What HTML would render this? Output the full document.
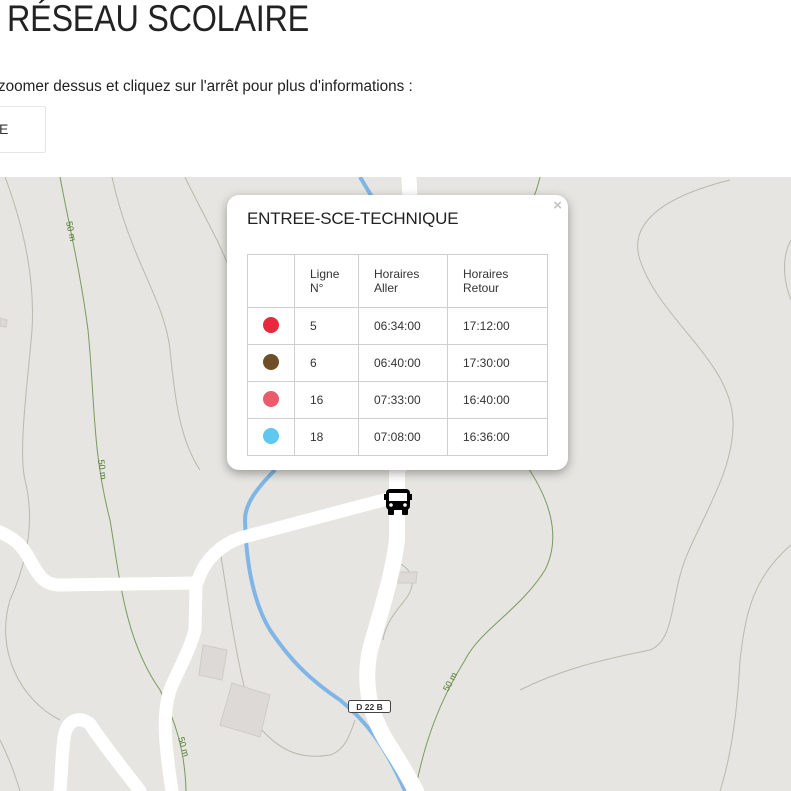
<!DOCTYPE html>
<html><head><meta charset="utf-8"><style>
*{margin:0;padding:0;box-sizing:border-box}
body{width:791px;height:791px;overflow:hidden;background:#fff;position:relative;font-family:"Liberation Sans",sans-serif}
.t{position:absolute;left:7px;top:-2px;font-size:37px;color:#222;letter-spacing:-0.3px;transform:scaleX(0.875);transform-origin:0 0;white-space:nowrap}
.s{position:absolute;left:-2px;top:78px;font-size:15.3px;color:#222;white-space:nowrap}
.box{position:absolute;left:-2px;top:106px;width:48px;height:47px;border:1px solid #e6e6e6;border-radius:2px;font-size:14px;color:#333;padding:14px 0 0 0}
.map{position:absolute;left:0;top:177px;width:791px;height:614px;background:#e6e5e1}
.pop{position:absolute;left:227px;top:195px;width:341px;height:275px;background:#fff;border-radius:12px;box-shadow:0 3px 10px rgba(0,0,0,.35)}
.pop h3{position:absolute;left:20px;top:14px;font-weight:normal;font-size:17px;color:#222;letter-spacing:-0.2px}
.x{position:absolute;right:6px;top:2px;color:#c3c3c3;font-size:15px;font-weight:bold}
table{position:absolute;left:20px;top:59px;border-collapse:collapse;font-size:12px;color:#333}
td{border:1px solid #cfcfcf;vertical-align:middle;padding:0 0 0 15px;height:37px}
tr.h td{height:53px;vertical-align:middle}
.d{width:16px;height:16px;border-radius:50%;display:inline-block;margin-left:0}
.tip{position:absolute;left:388px;top:469px;width:0;height:0;border-left:10px solid transparent;border-right:10px solid transparent;border-top:10px solid #fff}
</style></head><body>
<div class="t">RÉSEAU SCOLAIRE</div>
<div class="s">zoomer dessus et cliquez sur l'arrêt pour plus d'informations :</div>
<div class="box">E</div>
<div class="map">
<svg width="791" height="614" viewBox="0 177 791 614" xmlns="http://www.w3.org/2000/svg" style="position:absolute;left:0;top:0">
<g fill="none" stroke="#b9b9ad" stroke-width="1">
<path d="M5 177 C25 230 35 280 32 330 C28 380 18 450 25 480 C35 520 28 560 10 600 C-5 650 20 700 60 720"/>
<path d="M112 177 C130 260 165 300 170 350 C175 400 180 440 200 470"/>
<path d="M185 177 C215 240 240 270 240 330"/>
<path d="M730 180 C650 200 630 230 640 260 C660 320 730 360 733 420 C735 470 700 520 685 560 C670 600 675 640 650 650 C600 660 560 670 520 690"/>
<path d="M791 545 C750 580 745 620 740 660 C737 720 730 760 720 791"/>
<path d="M791 240 C780 260 785 285 791 300"/>
<path d="M220 550 C228 600 235 650 245 690"/>
<path d="M0 740 C10 760 15 775 20 791"/>
<path d="M262 730 C280 750 300 760 330 755 C345 750 350 735 355 720"/>
<path d="M390 560 C410 565 420 580 405 600 C395 612 385 625 383 640"/>
</g>
<g fill="none" stroke="#7b9a5d" stroke-width="1">
<path d="M60 177 C70 230 80 270 88 330 C95 400 92 450 110 520 C120 580 125 640 160 690 C175 720 185 750 186 791"/>
<path d="M515 450 C555 500 560 540 545 570 C520 610 480 630 465 660 C440 700 425 740 415 791"/>
<path d="M540 177 C538 185 536 192 534 196"/>
</g>
<text x="66" y="222" font-size="9" fill="#4f7a2e" transform="rotate(78 66 222)">50 m</text>
<text x="98" y="460" font-size="9" fill="#4f7a2e" transform="rotate(82 98 460)">50 m</text>
<text x="178" y="738" font-size="9" fill="#4f7a2e" transform="rotate(74 178 738)">50 m</text>
<text x="448" y="692" font-size="9" fill="#4f7a2e" transform="rotate(-62 448 692)">50 m</text>
<g fill="#dcd9d7" stroke="#cfcbc8">
<polygon points="203,645 227,650 222,680 199,675"/>
<polygon points="232,683 270,695 260,737 220,725"/>
<polygon points="398,572 417,572 416,583 398,583"/>
<polygon points="0,318 7,320 6,327 0,326"/>
</g>
<path d="M360 177 L372 197 M275 470 C255 490 245 505 245 520 C246 560 252 600 270 630 C290 660 310 680 340 700 C365 720 385 745 405 791" fill="none" stroke="#7fb6e6" stroke-width="4"/>
<g fill="none" stroke="#fff" stroke-linecap="round" stroke-linejoin="round">
<path d="M409 177 L410 200" stroke-width="15"/>
<path d="M397 470 L397 540 C392 580 378 620 370 650 C362 690 372 720 392 750 C405 770 410 780 416 791" stroke-width="16"/>
<path d="M395 497 L240 538 C220 545 206 560 200 575 L196 585 L195 630 C190 650 178 670 170 690 C162 715 165 745 172 791" stroke-width="13"/>
<path d="M196 583 L60 585 C45 585 40 578 30 560 C22 545 15 538 -5 530" stroke-width="13"/>
<path d="M60 791 C62 770 62 740 66 730 C70 720 80 716 90 724 C100 740 120 765 140 791" stroke-width="13"/>
</g>
<rect x="348.5" y="700.5" width="42" height="12" rx="2" fill="#fff" stroke="#444" stroke-width="1"/>
<text x="369.5" y="710" font-size="8.5" text-anchor="middle" fill="#333" font-weight="bold">D 22 B</text>
<g fill="#000">
<rect x="386" y="489" width="24" height="21" rx="4"/>
<rect x="388" y="509" width="6" height="6" rx="1"/>
<rect x="402" y="509" width="6" height="6" rx="1"/>
<rect x="384" y="494" width="2" height="6"/>
<rect x="410" y="494" width="2" height="6"/>
</g>
<rect x="389" y="493" width="18" height="8" fill="#fff"/>
<circle cx="391" cy="505" r="1.8" fill="#fff"/><circle cx="405" cy="505" r="1.8" fill="#fff"/>
</svg>
</div>
<div class="tip"></div>
<div class="pop">
<h3>ENTREE-SCE-TECHNIQUE</h3>
<div class="x">×</div>
<table>
<tr class="h"><td style="width:47px"></td><td style="width:64px">Ligne<br>N°</td><td style="width:89px">Horaires<br>Aller</td><td style="width:100px">Horaires<br>Retour</td></tr>
<tr><td><span class="d" style="background:#e8283c"></span></td><td>5</td><td>06:34:00</td><td>17:12:00</td></tr>
<tr><td><span class="d" style="background:#6e4e27"></span></td><td>6</td><td>06:40:00</td><td>17:30:00</td></tr>
<tr><td><span class="d" style="background:#ec5b6c"></span></td><td>16</td><td>07:33:00</td><td>16:40:00</td></tr>
<tr><td><span class="d" style="background:#5ec8f0"></span></td><td>18</td><td>07:08:00</td><td>16:36:00</td></tr>
</table>
</div>
</body></html>
